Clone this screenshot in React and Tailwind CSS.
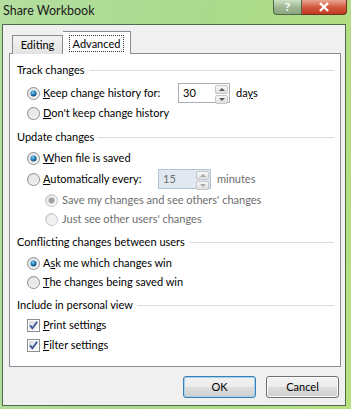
import React from "react";

function Radio({ checked, disabled }) {
  const edge = disabled ? "#c2c4c6" : "#8b8d8f";
  return (
    <svg width="13" height="13" viewBox="0 0 13 13" className="shrink-0">
      <defs>
        <linearGradient id="rfill" x1="0" y1="0" x2="1" y2="1">
          <stop offset="0" stopColor="#d8d9db" />
          <stop offset="1" stopColor="#ffffff" />
        </linearGradient>
        <radialGradient id="rdot" cx="0.4" cy="0.35" r="0.7">
          <stop offset="0" stopColor="#8fd8fb" />
          <stop offset="0.45" stopColor="#2a86c2" />
          <stop offset="1" stopColor="#0c3f68" />
        </radialGradient>
      </defs>
      <circle cx="6.5" cy="6.5" r="6" fill="url(#rfill)" stroke={edge} />
      <circle cx="6.5" cy="6.5" r="4.3" fill={disabled ? "#f1f1f1" : "#e9eaec"} />
      {checked && (
        <circle cx="6.5" cy="6.5" r="3" fill={disabled ? "#9fa1a3" : "url(#rdot)"} />
      )}
    </svg>
  );
}

function Check() {
  return (
    <svg width="13" height="13" viewBox="0 0 13 13" className="shrink-0">
      <defs>
        <linearGradient id="cfill" x1="0" y1="0" x2="1" y2="1">
          <stop offset="0" stopColor="#d6d7d9" />
          <stop offset="1" stopColor="#ffffff" />
        </linearGradient>
      </defs>
      <rect x="0.5" y="0.5" width="12" height="12" fill="#ffffff" stroke="#8b8d8f" />
      <rect x="2" y="2" width="9" height="9" fill="url(#cfill)" />
      <path d="M3 6.3 L5.4 9.2 L10.2 2.8" fill="none" stroke="#3f5a9b" strokeWidth="1.9" />
    </svg>
  );
}

function Spin({ value, disabled, width }) {
  return (
    <div
      className={`flex h-[20px] ${width} border ${
        disabled ? "border-[#b3c3d6] bg-[#e1e8f1]" : "border-[#abadb3] bg-white"
      }`}
    >
      <div
        className={`flex-1 pl-[4px] leading-[18px] ${
          disabled ? "text-[#6d6d6d]" : "text-black"
        }`}
      >
        {value}
      </div>
      <div className="flex w-[15px] flex-col gap-[1px] p-[1px]">
        {["M2 5 L5 2 L8 5 Z", "M2 2 L5 5 L8 2 Z"].map((d) => (
          <div
            key={d}
            className="flex flex-1 items-center justify-center rounded-[2px] border border-[#c4c7cc] bg-[linear-gradient(180deg,#f7f7f7,#dedede)]"
          >
            <svg width="10" height="7" viewBox="0 0 10 7">
              <path d={d} fill={disabled ? "#a5a5a5" : "#5a5a5a"} />
            </svg>
          </div>
        ))}
      </div>
    </div>
  );
}

function Group({ title, className }) {
  return (
    <div className={`flex h-[18px] items-center pl-[7px] pr-[6px] ${className}`}>
      <span>{title}</span>
      <div className="ml-[4px] h-px flex-1 bg-[#d5dfe5]" />
    </div>
  );
}

function Row({ children, className, sub }) {
  return (
    <div
      className={`flex items-center ${sub ? "gap-[4px] pl-[35px]" : "gap-[3px] pl-[17px]"} ${className}`}
    >
      {children}
    </div>
  );
}

export default function App() {
  return (
    <div className="w-[351px] h-[409px] overflow-hidden bg-[linear-gradient(100deg,#b4dfa0_0%,#a9da8c_50%,#b7df7e_100%)] font-['Lato',sans-serif] text-[11px] text-black">
      {/* title bar */}
      <div className="flex h-[24px] items-start">
        <div className="flex-1 pl-[3px] pt-[1px] text-[12.5px] leading-[19px] text-[#1b1b1b]">
          Share Workbook
        </div>
        <div className="mr-[4px] flex h-[15px]">
          <div className="flex w-[29px] items-center justify-center rounded-bl-[4px] border border-t-0 border-[#53674f] bg-[linear-gradient(180deg,#cfe3c4,#9fb894_50%,#8aa67e)] text-[12px] font-bold leading-none text-white">
            ?
          </div>
          <div className="flex w-[45px] items-center justify-center rounded-br-[4px] border border-l-0 border-t-0 border-[#6a3324] bg-[linear-gradient(180deg,#e9a896,#d2593f_50%,#c23a1f)]">
            <svg width="12" height="10" viewBox="0 0 12 10">
              <path d="M2 1 L10 9 M10 1 L2 9" stroke="#ffffff" strokeWidth="2.4" />
            </svg>
          </div>
        </div>
      </div>

      {/* client area */}
      <div className="ml-[2px] h-[382px] w-[344px] border border-[#4f6b4f] bg-[#f0f0f0] px-[6px]">
        {/* tabs */}
        <div className="relative z-10 mt-[6px] flex items-end pl-[3px]">
          <div className="-mb-px flex h-[19px] w-[51px] items-center justify-center border border-b-0 border-[#898c95] bg-[linear-gradient(180deg,#f3f3f3,#e3e3e3)] leading-[16px]">
            Editing
          </div>
          <div className="-mb-px flex h-[23px] w-[68px] items-center justify-center border border-b-0 border-l-0 border-[#898c95] bg-white">
            <span className="border border-dotted border-[#333] px-[3px] leading-[15px]">
              Advanced
            </span>
          </div>
        </div>

        {/* panel */}
        <div className="h-[314px] w-[332px] border border-[#898c95] bg-white pt-[7px]">
          <Group title="Track changes" />
          <Row className="mt-[4px] h-[20px]">
            <Radio checked />
            <span className="w-[132px]">
              <u>K</u>eep change history for:
            </span>
            <Spin value="30" width="w-[52px]" />
            <span className="ml-[3px]">
              da<u>y</u>s
            </span>
          </Row>
          <Row className="h-[20px]">
            <Radio />
            <span>
              <u>D</u>on't keep change history
            </span>
          </Row>

          <Group title="Update changes" className="mt-[5px]" />
          <Row className="mt-[2px] h-[20px]">
            <Radio checked />
            <span>
              <u>W</u>hen file is saved
            </span>
          </Row>
          <Row className="mt-[1px] h-[20px]">
            <Radio />
            <span className="w-[112px]">
              <u>A</u>utomatically every:
            </span>
            <Spin value="15" width="w-[53px]" disabled />
            <span className="ml-[3px] text-[#6d6d6d]">minutes</span>
          </Row>
          <Row sub className="mt-[1px] h-[20px] text-[#6d6d6d]">
            <Radio checked disabled />
            <span>Save my changes and see others' changes</span>
          </Row>
          <Row sub className="h-[19px] text-[#6d6d6d]">
            <Radio disabled />
            <span>Just see other users' changes</span>
          </Row>

          <Group title="Conflicting changes between users" className="mt-[4px]" />
          <Row className="mt-[2px] h-[20px]">
            <Radio checked />
            <span>
              A<u>s</u>k me which changes win
            </span>
          </Row>
          <Row className="h-[19px]">
            <Radio />
            <span>
              <u>T</u>he changes being saved win
            </span>
          </Row>

          <Group title="Include in personal view" className="mt-[4px]" />
          <Row className="mt-[2px] h-[19px]">
            <Check />
            <span>
              <u>P</u>rint settings
            </span>
          </Row>
          <Row className="h-[20px]">
            <Check />
            <span>
              <u>F</u>ilter settings
            </span>
          </Row>
        </div>

        {/* buttons */}
        <div className="ml-[174px] mt-[9px] flex gap-[10px]">
          <div className="flex h-[22px] w-[74px] items-center justify-center rounded-[3px] border border-[#3c7fb1] bg-[linear-gradient(180deg,#f2f2f2_0%,#ebebeb_50%,#dddddd_51%,#cfcfcf_100%)] shadow-[inset_0_0_0_1px_#9fd3f0]">
            OK
          </div>
          <div className="flex h-[22px] w-[74px] items-center justify-center rounded-[3px] border border-[#707070] bg-[linear-gradient(180deg,#f2f2f2_0%,#ebebeb_50%,#dddddd_51%,#cfcfcf_100%)] shadow-[inset_0_0_0_1px_#fcfcfc]">
            Cancel
          </div>
        </div>
      </div>
    </div>
  );
}
